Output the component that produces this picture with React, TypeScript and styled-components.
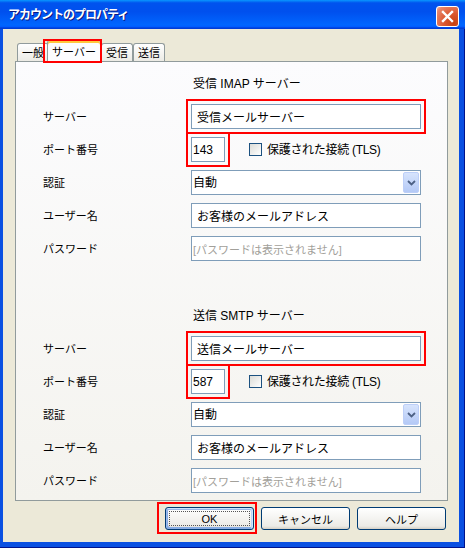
import React from "react";
import styled, { createGlobalStyle } from "styled-components";

const GlobalStyle = createGlobalStyle`
  html, body {
    margin: 0;
    padding: 0;
    background: #ffffff;
  }
  body {
    font-family: "Liberation Sans", "Noto Sans CJK JP", sans-serif;
    color: #000000;
  }
`;

const Window = styled.div`
  width: 465px;
  height: 548px;
  display: flex;
  flex-direction: column;
  background: #0a50e2;
  box-shadow: inset -1px -1px #00138c;
`;

const TitleBar = styled.div`
  height: 29px;
  flex: none;
  display: flex;
  align-items: flex-start;
  justify-content: space-between;
  padding: 0 6px 0 8px;
  background: linear-gradient(
    180deg,
    #0997ff 0%,
    #0053ee 10%,
    #0050ee 40%,
    #0066ff 86%,
    #005bff 93%,
    #003dd7 96%,
    #003dd7 100%
  );
`;

const Title = styled.span`
  margin-top: 7px;
  color: #ffffff;
  font-size: 12px;
  font-weight: bold;
  line-height: 16px;
  letter-spacing: -1px;
  text-shadow: 1px 1px #0a1883;
`;

const CloseButton = styled.button`
  margin-top: 6px;
  width: 23px;
  height: 21px;
  padding: 0;
  display: flex;
  align-items: center;
  justify-content: center;
  border: 1px solid #ffffff;
  border-radius: 3px;
  background: radial-gradient(
    circle at 80% 85%,
    #c8400f 0%,
    #dc5a33 45%,
    #e8866a 85%,
    #f4b9a4 100%
  );
`;

const Body = styled.div`
  flex: 1;
  margin: 0 6px 6px 3px;
  background: #ece9d8;
  display: flex;
  flex-direction: column;
`;

const TabStrip = styled.div`
  height: 21px;
  margin-top: 11px;
  padding-left: 14px;
  display: flex;
  align-items: flex-end;
`;

// red annotation frame drawn over the marked tab
const Tab = styled.div<{ $active?: boolean; $marked?: boolean }>`
  position: relative;
  box-sizing: border-box;
  height: ${(p) => (p.$active ? 22 : 18)}px;
  margin-bottom: ${(p) => (p.$active ? -1 : 0)}px;
  margin-left: ${(p) => (p.$active ? -2 : 0)}px;
  padding: ${(p) => (p.$active ? "1px 4px 0" : "0 4px")};
  display: flex;
  align-items: center;
  justify-content: center;
  font-size: 11px;
  line-height: 14px;
  border: 1px solid #919b9c;
  border-top-color: ${(p) => (p.$active ? "#e68b2c" : "#919b9c")};
  border-bottom: none;
  border-radius: 3px 3px 0 0;
  background: ${(p) =>
    p.$active ? "#fcfcfe" : "linear-gradient(180deg, #ffffff, #ecebe5)"};
  box-shadow: ${(p) => (p.$active ? "inset 0 2px #ffc83c" : "none")};
  z-index: ${(p) => (p.$active ? 1 : 0)};

  &::before {
    content: "";
    display: ${(p) => (p.$marked ? "block" : "none")};
    position: absolute;
    top: -2px;
    left: -5px;
    right: -2px;
    bottom: -1px;
    border: 2px solid #ff0000;
  }
`;

const Panel = styled.div`
  margin: 0 11px 0 12px;
  padding: 14px 26px 7px 27px;
  border: 1px solid #919b9c;
  background: linear-gradient(180deg, #fcfcfe, #f4f3ee);
  display: flex;
  flex-direction: column;
`;

const Section = styled.section<{ $first?: boolean }>`
  margin-top: ${(p) => (p.$first ? 0 : 47)}px;
  display: flex;
  flex-direction: column;
`;

const Heading = styled.div`
  margin-left: 150px;
  margin-bottom: 12px;
  font-size: 12px;
  line-height: 16px;
`;

const Rows = styled.div`
  display: grid;
  grid-template-columns: 148px 230px;
  grid-auto-rows: 25px;
  row-gap: 8px;
  align-items: center;
`;

const Label = styled.span`
  font-size: 11px;
  line-height: 16px;
`;

const Field = styled.input<{ $pad?: number; $marked?: boolean; $muted?: boolean }>`
  box-sizing: border-box;
  width: ${(p) => (p.width ? `${p.width}px` : "100%")};
  height: 25px;
  margin: 0;
  padding: 0 0 0 ${(p) => p.$pad ?? 1}px;
  border: 1px solid #7f9db9;
  background: #ffffff;
  font-family: inherit;
  font-size: ${(p) => (p.$muted ? 11 : 12)}px;
  color: ${(p) => (p.$muted ? "#a2a09a" : "#000000")};
  outline: ${(p) => (p.$marked ? "2px solid #ff0000" : "none")};
  outline-offset: 3px;
`;

const PortCell = styled.div`
  display: flex;
  align-items: center;
`;

const CheckBox = styled.span`
  box-sizing: border-box;
  width: 13px;
  height: 13px;
  margin-left: 24px;
  border: 1px solid #1c5180;
  background: linear-gradient(135deg, #dcdcd7, #ffffff);
`;

const CheckLabel = styled.span`
  margin-left: 5px;
  font-size: 12px;
  line-height: 16px;
  letter-spacing: -0.3px;
  white-space: nowrap;
`;

const SelectBox = styled.div`
  box-sizing: border-box;
  height: 25px;
  display: flex;
  align-items: center;
  padding: 1px;
  border: 1px solid #7f9db9;
  background: #ffffff;
`;

const SelectValue = styled.span`
  flex: 1;
  font-size: 12px;
  line-height: 16px;
`;

const DropButton = styled.span`
  box-sizing: border-box;
  width: 16px;
  height: 21px;
  display: flex;
  align-items: center;
  justify-content: center;
  border: 1px solid #bdcff8;
  border-radius: 2px;
  background: linear-gradient(180deg, #d7e4fd, #b4c9f6);
`;

const ButtonRow = styled.div`
  margin: 6px 13px 0 0;
  display: flex;
  justify-content: flex-end;
  gap: 7px;
`;

const PushButton = styled.button<{ $default?: boolean; $marked?: boolean }>`
  position: relative;
  box-sizing: border-box;
  width: 89px;
  height: 23px;
  padding: 0;
  border: 1px solid #003c74;
  border-radius: 3px;
  background: linear-gradient(180deg, #ffffff 0%, #ecebe6 86%, #d6d0c5 100%);
  font-family: inherit;
  font-size: 11px;
  color: #000000;
  box-shadow: ${(p) =>
    p.$default
      ? "inset -1px 1px #cee7ff, inset 1px 2px #98b8ea, inset -2px 2px #bcd4f6, inset 1px -1px #89ade4, inset 2px -2px #89ade4"
      : "none"};

  /* focus rectangle */
  &::after {
    content: "";
    display: ${(p) => (p.$default ? "block" : "none")};
    position: absolute;
    inset: 3px;
    border: 1px dotted #555555;
  }

  /* red annotation frame */
  &::before {
    content: "";
    display: ${(p) => (p.$marked ? "block" : "none")};
    position: absolute;
    top: -6px;
    left: -9px;
    right: -4px;
    bottom: -5px;
    border: 2px solid #ff0000;
  }
`;

type Server = {
  heading: string;
  host: string;
  port: string;
};

const SERVERS: Server[] = [
  { heading: "受信 IMAP サーバー", host: "受信メールサーバー", port: "143" },
  { heading: "送信 SMTP サーバー", host: "送信メールサーバー", port: "587" },
];

const CloseIcon = () => (
  <svg width="13" height="13" viewBox="0 0 13 13">
    <path
      d="M2 2 L11 11 M11 2 L2 11"
      stroke="#ffffff"
      strokeWidth="2.4"
      strokeLinecap="square"
    />
  </svg>
);

const Chevron = () => (
  <svg width="9" height="6" viewBox="0 0 9 6">
    <path d="M1 1 L4.5 4.5 L8 1" fill="none" stroke="#4d6185" strokeWidth="1.8" />
  </svg>
);

const ServerSection: React.FC<{ server: Server; first?: boolean }> = ({
  server,
  first,
}) => (
  <Section $first={first}>
    <Heading>{server.heading}</Heading>
    <Rows>
      <Label>サーバー</Label>
      <Field readOnly value={server.host} $pad={5} $marked />

      <Label>ポート番号</Label>
      <PortCell>
        <Field readOnly value={server.port} width={34} $marked />
        <CheckBox />
        <CheckLabel>保護された接続 (TLS)</CheckLabel>
      </PortCell>

      <Label>認証</Label>
      <SelectBox>
        <SelectValue>自動</SelectValue>
        <DropButton>
          <Chevron />
        </DropButton>
      </SelectBox>

      <Label>ユーザー名</Label>
      <Field readOnly value="お客様のメールアドレス" $pad={5} />

      <Label>パスワード</Label>
      <Field readOnly value="[パスワードは表示されません]" $muted />
    </Rows>
  </Section>
);

const App: React.FC = () => {
  return (
    <>
      <GlobalStyle />
      <Window>
        <TitleBar>
          <Title>アカウントのプロパティ</Title>
          <CloseButton aria-label="閉じる">
            <CloseIcon />
          </CloseButton>
        </TitleBar>
        <Body>
          <TabStrip>
            <Tab>一般</Tab>
            <Tab $active $marked>
              サーバー
            </Tab>
            <Tab>受信</Tab>
            <Tab>送信</Tab>
          </TabStrip>
          <Panel>
            {SERVERS.map((server, i) => (
              <ServerSection key={server.heading} server={server} first={i === 0} />
            ))}
          </Panel>
          <ButtonRow>
            <PushButton $default $marked>
              OK
            </PushButton>
            <PushButton>キャンセル</PushButton>
            <PushButton>ヘルプ</PushButton>
          </ButtonRow>
        </Body>
      </Window>
    </>
  );
};

export default App;
